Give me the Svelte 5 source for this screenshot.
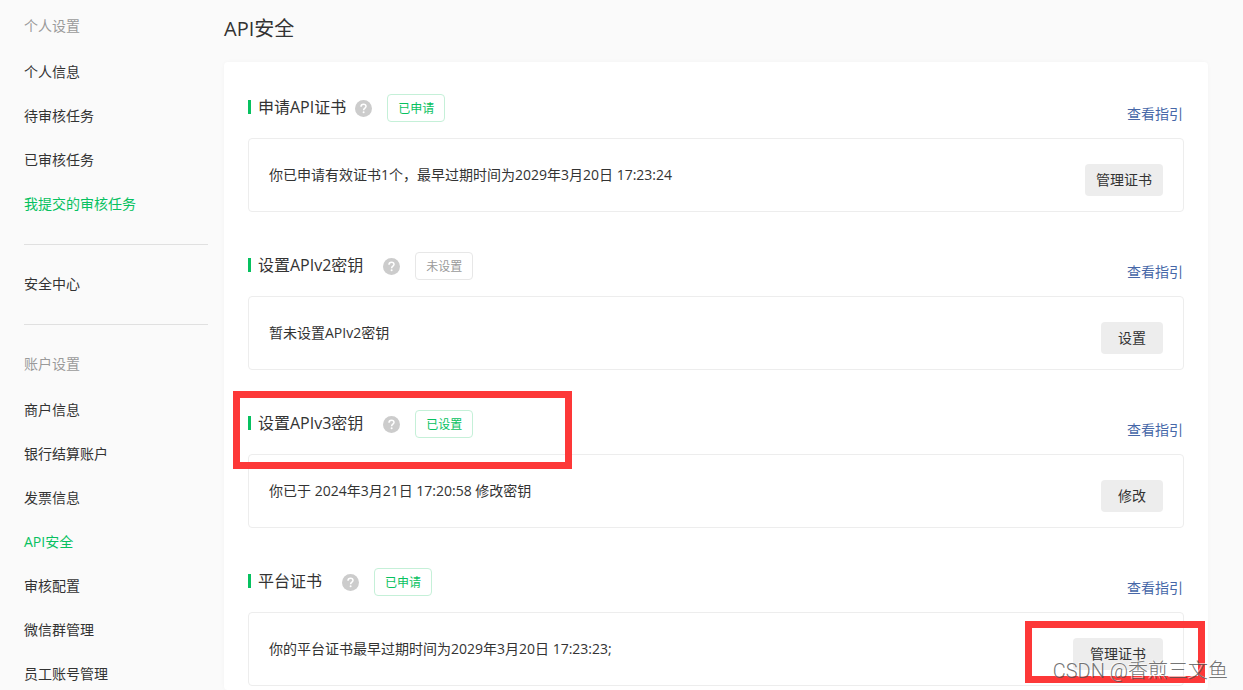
<script>
  const groups = [
    { title: '个人设置', items: ['个人信息', '待审核任务', '已审核任务', '我提交的审核任务'] },
    { title: '', items: ['安全中心'] },
    {
      title: '账户设置',
      items: ['商户信息', '银行结算账户', '发票信息', 'API安全', '审核配置', '微信群管理', '员工账号管理']
    }
  ];
  const active = ['我提交的审核任务', 'API安全'];

  const sections = [
    { title: '申请API证书', near: true, tag: '已申请', done: true, text: '你已申请有效证书1个，最早过期时间为2029年3月20日 17:23:24', action: '管理证书', compact: true },
    { title: '设置APIv2密钥', tag: '未设置', done: false, text: '暂未设置APIv2密钥', action: '设置' },
    { title: '设置APIv3密钥', tag: '已设置', done: true, text: '你已于 2024年3月21日 17:20:58 修改密钥', action: '修改', markHead: true },
    { title: '平台证书', tag: '已申请', done: true, text: '你的平台证书最早过期时间为2029年3月20日 17:23:23;', action: '管理证书', markAction: true }
  ];
</script>

<div class="page">
  <nav class="sidebar">
    {#each groups as group}
      <div class="group">
        {#if group.title}<h2>{group.title}</h2>{/if}
        <ul>
          {#each group.items as item}
            <li><a href="#top" class:active={active.includes(item)}>{item}</a></li>
          {/each}
        </ul>
      </div>
    {/each}
  </nav>

  <main>
    <h1>API安全</h1>
    <div class="card">
      {#each sections as s}
        <section>
          <header>
            <h3>{s.title}</h3>
            <button class="help" class:near={s.near} aria-label="帮助">
              <svg viewBox="0 0 17 17" width="17" height="17" aria-hidden="true">
                <circle cx="8.5" cy="8.5" r="8.5" fill="#ccc" />
                <path d="M6 6.7C6 5.2 7 4.3 8.5 4.3S11 5.2 11 6.5C11 8.1 8.6 8.2 8.6 10.2" fill="none" stroke="#fff" stroke-width="1.5" />
                <circle cx="8.6" cy="12.3" r="1" fill="#fff" />
              </svg>
            </button>
            <span class="tag" class:done={s.done}>{s.tag}</span>
            <a class="guide" href="#top">查看指引</a>
            {#if s.markHead}<div class="mark mark-head"></div>{/if}
          </header>
          <div class="box">
            <p>{s.text}</p>
            <button class="action" class:compact={s.compact}>{s.action}</button>
            {#if s.markAction}<div class="mark mark-action"></div>{/if}
          </div>
        </section>
      {/each}
    </div>
  </main>
  <div class="watermark">CSDN @香煎三文鱼</div>
</div>

<style>
  :global(body) {
    margin: 0;
    background: #fafafa;
  }
  .page {
    position: relative;
    display: flex;
    min-height: 100vh;
    overflow: hidden;
    box-sizing: border-box;
    font: 14px/20px 'Open Sans', 'Noto Sans CJK SC', sans-serif;
    font-weight: 400;
    color: #333;
  }
  h1, h2, h3, p, ul {
    margin: 0;
    padding: 0;
    font-weight: inherit;
  }
  a {
    text-decoration: none;
    color: inherit;
  }
  button {
    font: inherit;
    color: inherit;
    border: 0;
    padding: 0;
    cursor: pointer;
  }
  .sidebar {
    flex: 0 0 184px;
    padding: 16px 16px 0 24px;
  }
  .group + .group {
    margin-top: 30px;
    padding-top: 29px;
    border-top: 1px solid #e0e0e0;
  }
  h2 {
    font-size: 14px;
    line-height: 20px;
    color: #9a9a9a;
    margin-bottom: 26px;
  }
  ul {
    display: grid;
    gap: 24px;
    list-style: none;
  }
  li {
    height: 20px;
  }
  .active {
    color: #07c160;
  }
  main {
    flex: 1;
    min-width: 0;
    display: flex;
    flex-direction: column;
    margin-right: 35px;
  }
  h1 {
    font-size: 20px;
    line-height: 28px;
    margin: 15px 0 19px;
  }
  .card {
    flex: 1;
    display: flex;
    flex-direction: column;
    gap: 40px;
    padding: 32px 24px 0;
    background: #fff;
    border-radius: 4px;
    box-shadow: 0 0 4px rgba(0, 0, 0, 0.03);
  }
  header {
    position: relative;
    display: flex;
    align-items: center;
    height: 28px;
    margin-bottom: 16px;
  }
  h3 {
    display: flex;
    align-items: center;
    gap: 7px;
    font-size: 16px;
    line-height: 26px;
    padding-bottom: 2px;
  }
  h3::before {
    content: '';
    width: 3px;
    height: 14px;
    background: #07c160;
  }
  .help {
    display: flex;
    margin: 0 15px 0 20px;
    background: none;
  }
  .help.near {
    margin-left: 9px;
  }
  .tag {
    box-sizing: border-box;
    height: 28px;
    padding: 0 10px;
    border: 1px solid #e7e7e7;
    border-radius: 4px;
    font-size: 12px;
    line-height: 28px;
    color: #9a9a9a;
  }
  .tag.done {
    border-color: #c5f0d8;
    color: #07c160;
  }
  .guide {
    margin: 12px 1px 0 auto;
    color: #4667a8;
  }
  .box {
    position: relative;
    display: flex;
    align-items: flex-start;
    justify-content: space-between;
    padding: 25px 20px 15px;
    border: 1px solid #ededed;
    border-radius: 4px;
  }
  p {
    line-height: 22px;
  }
  .action {
    height: 32px;
    padding: 0 17px;
    border-radius: 4px;
    background: #ededed;
  }
  .action.compact {
    padding: 0 11px;
  }
  .mark {
    position: absolute;
    box-sizing: border-box;
    border: 7px solid #fd3838;
    pointer-events: none;
  }
  .mark-head {
    left: -15px;
    top: -19px;
    width: 339px;
    height: 78px;
    z-index: 1;
  }
  .mark-action {
    right: -22px;
    top: 8px;
    width: 180px;
    height: 62px;
  }
  .watermark {
    position: absolute;
    right: 15px;
    bottom: 5px;
    font: 300 20px/28px Roboto, 'Noto Sans CJK SC', sans-serif;
    color: rgba(80, 80, 80, 0.8);
    text-shadow: -1px -1px 0 rgba(255, 255, 255, 0.6);
    pointer-events: none;
  }
</style>
